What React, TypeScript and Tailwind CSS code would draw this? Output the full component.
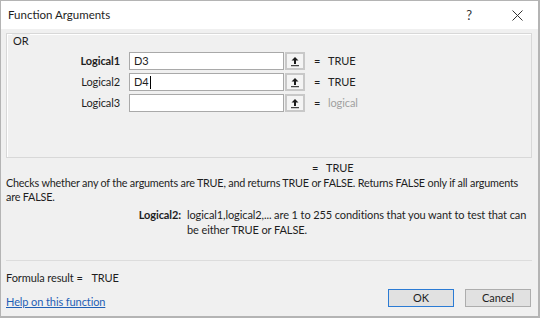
import React from "react";

function RefBtn() {
  return (
    <div className="w-[20px] h-[18px] border-2 border-[#c8c8c8] bg-[#f4f4f4] flex items-center justify-center">
      <svg width="10" height="11" viewBox="0 0 10 11">
        <path d="M5 1 L1.5 4.5 L4 4.5 L4 8 L6 8 L6 4.5 L8.5 4.5 Z" fill="#1a1a1a" />
        <rect x="1" y="9.2" width="8" height="1" fill="#1a1a1a" />
      </svg>
    </div>
  );
}

function Row({ label, value, result, bold, caret }: { label: string; value: string; result: string; bold?: boolean; caret?: boolean }) {
  return (
    <div className="flex items-center h-[18px]">
      <div className={`w-[115px] text-right pr-[2px] ${bold ? "font-bold" : ""}`}>{label}</div>
      <div className="ml-[7px] w-[155px] h-[18px] bg-white border border-[#a9a9a9] flex items-center px-[4px]">
        <span>{value}</span>
        {caret && <span className="inline-block w-px h-[13px] bg-black ml-px" />}
      </div>
      <div className="ml-px">
        <RefBtn />
      </div>
      <div className="ml-[9px] w-[14px]">=</div>
      <div className={result === "logical" ? "text-[#a0a0a0]" : "text-[#222]"}>{result}</div>
    </div>
  );
}

export default function App() {
  return (
    <div
      className="w-[540px] h-[318px] bg-[#f0f0f0] text-[#1e1e1e] text-[11px] tracking-[-0.1px] leading-[14px] flex flex-col border border-[#b4b4b4] border-r-2 border-b-2 overflow-hidden"
      style={{ fontFamily: 'Lato, "Liberation Sans", Arial, sans-serif' }}
    >
      <div className="h-[28px] bg-white flex items-center justify-between pl-[7px] pr-[15px] shrink-0">
        <span className="text-[11.5px] tracking-normal">Function Arguments</span>
        <div className="flex items-center gap-[40px]">
          <span className="text-[13px] text-[#333]">?</span>
          <svg width="11" height="11" viewBox="0 0 11 11">
            <path d="M0.5 0.5 L10.5 10.5 M10.5 0.5 L0.5 10.5" stroke="#333" strokeWidth="1" />
          </svg>
        </div>
      </div>
      <div className="px-[4px] flex flex-col">
        <div className="ml-px mt-[4px] w-[526px] h-[125px] border border-[#d8d8d8] shadow-[inset_1px_1px_0_#ffffff] relative">
          <div className="absolute left-[5px] top-[0px] px-[1px] bg-[#f0f0f0]">OR</div>
          <div className="pt-[18px] flex flex-col gap-[3px]">
            <Row label="Logical1" value="D3" result="TRUE" bold />
            <Row label="Logical2" value="D4" result="TRUE" caret />
            <Row label="Logical3" value="" result="logical" />
          </div>
        </div>
        <div className="mt-[3px] flex h-[14px]">
          <div className="w-[307px]" />
          <div className="w-[14px]">=</div>
          <div>TRUE</div>
        </div>
        <div className="mt-[1px] ml-px text-[10.8px] tracking-[-0.2px]">
          Checks whether any of the arguments are TRUE, and returns TRUE or FALSE. Returns FALSE only if all arguments are FALSE.
        </div>
        <div className="mt-[3px] flex leading-[15px]">
          <div className="w-[176px] text-right font-bold">Logical2:</div>
          <div className="ml-[6px] w-[343px]">
            logical1,logical2,... are 1 to 255 conditions that you want to test that can be either TRUE or FALSE.
          </div>
        </div>
        <div className="mt-[23px] ml-px h-px bg-[#dcdcdc] w-[526px]" />
        <div className="mt-[10px] ml-px h-[14px]">
          Formula result = <span className="ml-[6px]">TRUE</span>
        </div>
        <div className="mt-[2px] ml-px flex items-center justify-between">
          <a className="text-[#1f5fb5] underline mt-[8px]">Help on this function</a>
          <div className="flex gap-[11px] pr-[3px]">
            <div className="w-[66px] h-[18px] border border-[#2b7bd4] bg-[#e1e1e1] flex items-center justify-center">OK</div>
            <div className="w-[66px] h-[18px] border border-[#adadad] bg-[#e1e1e1] flex items-center justify-center">Cancel</div>
          </div>
        </div>
      </div>
    </div>
  );
}
